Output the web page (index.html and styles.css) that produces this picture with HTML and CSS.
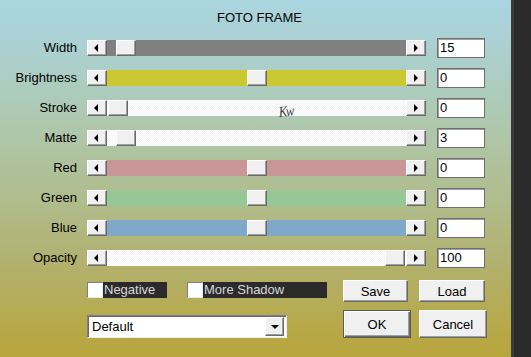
FILE: index.html
```html
<!DOCTYPE html>
<html>
<head>
<meta charset="utf-8">
<link rel="stylesheet" href="styles.css">
</head>
<body>
<div class="window">
  <div class="dialog">
    <div class="title">FOTO FRAME</div>
    <div class="sliders">
      <div class="row">
        <span class="label">Width</span>
        <div class="scroll"><div class="arrow"><i class="tri-left"></i></div><div class="track gray"><div class="thumb" style="margin-left:9px"></div></div><div class="arrow"><i class="tri-right"></i></div></div>
        <div class="value">15</div>
      </div>
      <div class="row">
        <span class="label">Brightness</span>
        <div class="scroll"><div class="arrow"><i class="tri-left"></i></div><div class="track yellow"><div class="thumb" style="margin-left:140px"></div></div><div class="arrow"><i class="tri-right"></i></div></div>
        <div class="value">0</div>
      </div>
      <div class="row">
        <span class="label">Stroke</span>
        <div class="scroll"><div class="arrow"><i class="tri-left"></i></div><div class="track white"><div class="thumb" style="margin-left:1px"></div></div><div class="arrow"><i class="tri-right"></i></div></div>
        <div class="value">0</div>
      </div>
      <div class="row">
        <span class="label">Matte</span>
        <div class="scroll"><div class="arrow"><i class="tri-left"></i></div><div class="track white"><div class="thumb" style="margin-left:9px"></div></div><div class="arrow"><i class="tri-right"></i></div></div>
        <div class="value">3</div>
      </div>
      <div class="row">
        <span class="label">Red</span>
        <div class="scroll"><div class="arrow"><i class="tri-left"></i></div><div class="track red"><div class="thumb" style="margin-left:140px"></div></div><div class="arrow"><i class="tri-right"></i></div></div>
        <div class="value">0</div>
      </div>
      <div class="row">
        <span class="label">Green</span>
        <div class="scroll"><div class="arrow"><i class="tri-left"></i></div><div class="track green"><div class="thumb" style="margin-left:140px"></div></div><div class="arrow"><i class="tri-right"></i></div></div>
        <div class="value">0</div>
      </div>
      <div class="row">
        <span class="label">Blue</span>
        <div class="scroll"><div class="arrow"><i class="tri-left"></i></div><div class="track blue"><div class="thumb" style="margin-left:140px"></div></div><div class="arrow"><i class="tri-right"></i></div></div>
        <div class="value">0</div>
      </div>
      <div class="row">
        <span class="label">Opacity</span>
        <div class="scroll"><div class="arrow"><i class="tri-left"></i></div><div class="track white"><div class="thumb" style="margin-left:278px"></div></div><div class="arrow"><i class="tri-right"></i></div></div>
        <div class="value">100</div>
      </div>
    </div>
    <div class="bottom-row first">
      <div class="check negative"><span class="box"></span><span class="check-label">Negative</span></div>
      <div class="check shadow"><span class="box"></span><span class="check-label">More Shadow</span></div>
      <div class="btn save">Save</div>
      <div class="btn load">Load</div>
    </div>
    <div class="bottom-row second">
      <div class="select"><span class="select-text">Default</span><span class="select-btn"><i class="tri-down"></i></span></div>
      <div class="btn ok">OK</div>
      <div class="btn cancel">Cancel</div>
    </div>
    <span class="sig">Kw</span>
  </div>
  <div class="strip"></div>
</div>
</body>
</html>
```
FILE: styles.css
```css
* { box-sizing: border-box; }
html, body { margin: 0; padding: 0; }
body {
  width: 531px;
  height: 357px;
  overflow: hidden;
  font-family: "Liberation Sans", Arial, sans-serif;
  font-size: 13px;
  color: #000;
}
.window {
  display: flex;
  width: 531px;
  height: 357px;
}
.dialog {
  position: relative;
  width: 511px;
  height: 357px;
  background: linear-gradient(180deg, #a9d5e0 0%, #abd0d0 14%, #aec9b2 32%, #b0bd8e 55%, #b2b06c 75%, #b6aa4c 90%, #b9a53d 100%);
}
.strip {
  width: 20px;
  height: 357px;
  background: #2b2b2b;
  border-left: 3px solid #3a3a3a;
}
.title {
  height: 33px;
  padding-top: 10px;
  line-height: 16px;
  text-align: center;
  padding-left: 8px;
}
.sliders { display: flex; flex-direction: column; }
.row {
  display: flex;
  align-items: center;
  height: 30px;
}
.label {
  width: 77px;
  text-align: right;
  line-height: 16px;
}
.scroll {
  margin-left: 10px;
  width: 339px;
  height: 16px;
  display: flex;
}
.arrow {
  width: 20px;
  height: 16px;
  background: #f0f0f0;
  border-top: 1px solid #fff;
  border-left: 1px solid #fff;
  border-right: 1px solid #696969;
  border-bottom: 1px solid #696969;
  box-shadow: inset -1px -1px 0 #a0a0a0;
  display: flex;
  align-items: center;
  justify-content: center;
  flex: none;
}
.tri-left {
  width: 0; height: 0;
  border-top: 4px solid transparent;
  border-bottom: 4px solid transparent;
  border-right: 4px solid #000;
  margin-left: -2px;
}
.tri-right {
  width: 0; height: 0;
  border-top: 4px solid transparent;
  border-bottom: 4px solid transparent;
  border-left: 4px solid #000;
  margin-left: 0px;
}
.tri-down {
  width: 0; height: 0;
  border-left: 4px solid transparent;
  border-right: 4px solid transparent;
  border-top: 4px solid #000;
}
.track {
  flex: 1;
  height: 16px;
  display: flex;
}
.track.gray { background: #808080; }
.track.yellow { background: #cbc932; }
.track.red { background: #c89696; }
.track.green { background: #96c896; }
.track.blue { background: #80a8c8; }
.track.white {
  background: repeating-conic-gradient(#ffffff 0 25%, #f3f3f3 0 50%) 0 0 / 2px 2px;
}
.thumb {
  width: 20px;
  height: 16px;
  background: #f0f0f0;
  border-top: 1px solid #fff;
  border-left: 1px solid #fff;
  border-right: 1px solid #696969;
  border-bottom: 1px solid #696969;
  box-shadow: inset -1px -1px 0 #a0a0a0;
  flex: none;
}
.value {
  margin-left: 11px;
  width: 48px;
  height: 20px;
  background: #fff;
  border: 1px solid #6f6f6f;
  box-shadow: inset 1px 1px 0 #a0a0a0;
  padding-left: 2px;
  line-height: 18px;
}
.bottom-row {
  display: flex;
  padding-left: 87px;
}
.bottom-row.first {
  margin-top: 7px;
  height: 22px;
}
.bottom-row.second {
  margin-top: 8px;
  height: 28px;
}
.check {
  display: flex;
  height: 16px;
  margin-top: 2px;
}
.check.shadow { margin-left: 20px; }
.box {
  width: 16px;
  height: 16px;
  background: #fff;
  border-top: 1px solid #808080;
  border-left: 1px solid #808080;
  border-right: 1px solid #e8e8e8;
  border-bottom: 1px solid #e8e8e8;
}
.check-label {
  background: #2b2b2b;
  color: #d9d9d9;
  height: 16px;
  line-height: 16px;
  padding-left: 1px;
}
.negative .check-label { width: 64px; }
.shadow .check-label { width: 124px; }
.btn {
  background: #f0f0f0;
  border-top: 1px solid #fff;
  border-left: 1px solid #fff;
  border-right: 1px solid #696969;
  border-bottom: 1px solid #696969;
  box-shadow: inset -1px -1px 0 #a0a0a0;
  display: flex;
  align-items: center;
  justify-content: center;
  height: 22px;
}
.save { margin-left: 16px; width: 65px; }
.load { margin-left: 11px; width: 66px; }
.ok {
  margin-left: 56px;
  width: 68px;
  height: 28px;
  border: 1px solid #5a5a5a;
  box-shadow: inset 1px 1px 0 #fff, inset -1px -1px 0 #696969, inset -2px -2px 0 #a0a0a0;
}
.cancel {
  margin-left: 8px;
  width: 68px;
  height: 28px;
}
.select {
  margin-top: 5px;
  width: 200px;
  height: 23px;
  background: #fff;
  border-top: 1px solid #808080;
  border-left: 1px solid #808080;
  border-right: 1px solid #f0f0f0;
  border-bottom: 1px solid #f0f0f0;
  box-shadow: inset 1px 1px 0 #696969;
  display: flex;
  align-items: center;
  padding: 1px 2px 1px 4px;
}
.select-text { flex: 1; }
.select-btn {
  width: 19px;
  height: 19px;
  background: #f0f0f0;
  border-top: 1px solid #fff;
  border-left: 1px solid #fff;
  border-right: 1px solid #696969;
  border-bottom: 1px solid #696969;
  box-shadow: inset -1px -1px 0 #a0a0a0;
  display: flex;
  align-items: center;
  justify-content: center;
}
.sig {
  position: absolute;
  left: 278px;
  top: 104px;
  font-family: "Liberation Serif", serif;
  font-style: italic;
  font-size: 15px;
  color: #444;
  letter-spacing: -2px;
  transform: rotate(-6deg) scaleX(0.85);
  transform-origin: left top;
}
```
